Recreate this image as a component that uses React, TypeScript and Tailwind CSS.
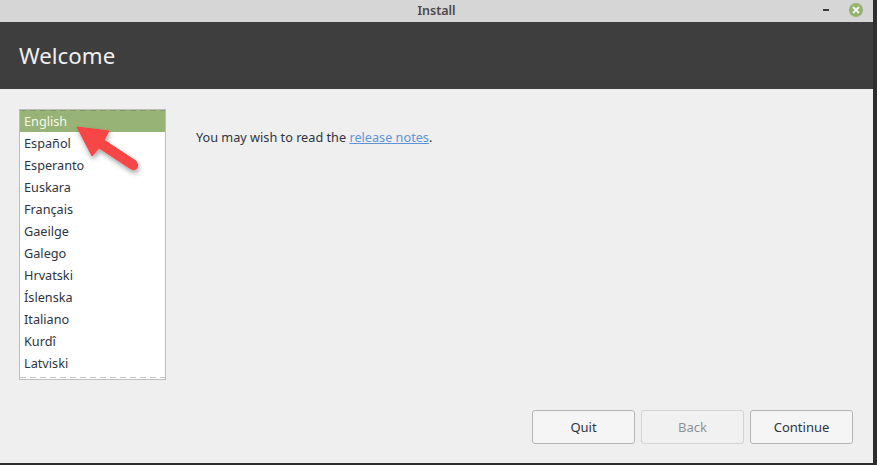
const languages = [
  'English',
  'Español',
  'Esperanto',
  'Euskara',
  'Français',
  'Gaeilge',
  'Galego',
  'Hrvatski',
  'Íslenska',
  'Italiano',
  'Kurdî',
  'Latviski',
];

function LanguageList() {
  return (
    <div className="relative w-[147px] h-[271px] border border-[#bdbdbd] bg-white flex flex-col">
      <div className="relative h-[22px] shrink-0 bg-[#97b376]">
        <div className="h-px bg-[repeating-linear-gradient(90deg,#7f9f64_0,#7f9f64_6px,transparent_6px,transparent_10px)]" />
      </div>
      <div className="absolute left-0 right-0 top-px flex flex-col">
        {languages.map((name, i) => (
          <div
            key={name}
            className={`h-[22px] pl-[4px] flex items-center text-[12.7px] ${i === 0 ? 'text-[#f4f8ee]' : 'text-[#2e3440]'}`}
          >
            {name}
          </div>
        ))}
      </div>
      <div className="mt-auto mb-[1px] h-px bg-[repeating-linear-gradient(90deg,#c4c4c4_0,#c4c4c4_6px,transparent_6px,transparent_10px)]" />
    </div>
  );
}

function Arrow() {
  return (
    <svg className="absolute left-[70px] top-[120px]" width="80" height="60" viewBox="0 0 80 60">
      <defs>
        <filter id="arrow-shadow" x="-30%" y="-30%" width="160%" height="160%">
          <feDropShadow dx="1" dy="3" stdDeviation="2.5" floodColor="#000" floodOpacity="0.35" />
        </filter>
      </defs>
      <g filter="url(#arrow-shadow)">
        <path
          d="M7 7L39 11L34 20L66 41Q69 45 67 48Q65 51 61 49L29 28L22 36Z"
          fill="#f84444"
          stroke="#f84444"
          strokeWidth="1"
          strokeLinejoin="round"
        />
      </g>
    </svg>
  );
}

function WizardButton({ label, disabled }: { label: string; disabled?: boolean }) {
  return (
    <button
      className={`w-[103px] h-[34px] pt-[2px] rounded-[3px] border text-[13px] ${
        disabled
          ? 'border-[#d4d4d4] bg-[#f1f1f1] text-[#8f9297]'
          : 'border-[#b5b5b5] bg-[#f5f5f5] text-[#2e3440]'
      }`}
    >
      {label}
    </button>
  );
}

export default function App() {
  return (
    <div className="w-[877px] h-[465px] bg-[#2e2e2e] pr-[4px] pb-[2px] overflow-hidden font-['Noto_Sans',sans-serif]">
      <div className="relative h-full flex flex-col bg-[#efefef]">
        {/* Title bar */}
        <div className="relative h-[22px] shrink-0 bg-[#d6d6d6] flex items-center justify-center text-[12.5px] font-semibold text-[#4a4a4a]">
          Install
          <div className="absolute left-[823px] top-[9px] w-[6px] h-[2px] bg-[#3c3c3c]" />
          <div className="absolute left-[849px] top-[3px] w-[14px] h-[14px] rounded-full bg-[#93b36f] flex items-center justify-center">
            <svg width="8" height="8" viewBox="0 0 8 8">
              <path d="M1 1L7 7M7 1L1 7" stroke="#f5f5f5" strokeWidth="1.8" />
            </svg>
          </div>
        </div>

        {/* Header */}
        <div className="h-[67px] shrink-0 bg-[#3e3e3e] flex items-center pl-[19px] text-[22.3px] text-[#f0f0f0]">
          Welcome
        </div>

        {/* Content */}
        <div className="flex-1 flex flex-col pl-[19px] pr-[20px] pt-[20px] pb-[19px]">
          <div className="flex items-start">
            <LanguageList />
            <p className="ml-[30px] mt-[19px] text-[12.7px] text-[#2e3440]">
              You may wish to read the{' '}
              <span className="text-[#5f94d9] underline">release notes</span>.
            </p>
          </div>
          <div className="mt-auto flex justify-end gap-[6px]">
            <WizardButton label="Quit" />
            <WizardButton label="Back" disabled />
            <WizardButton label="Continue" />
          </div>
        </div>

        <Arrow />
      </div>
    </div>
  );
}
